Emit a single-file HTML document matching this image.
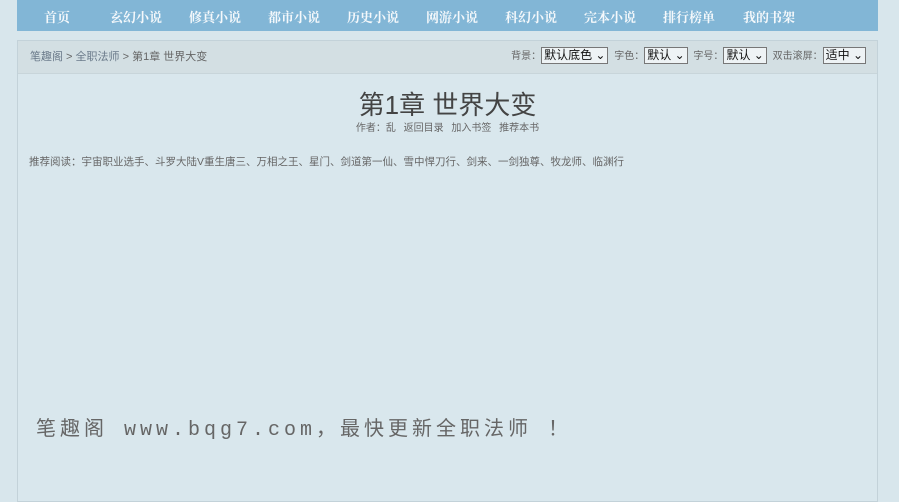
<!DOCTYPE html>
<html><head><meta charset="utf-8"><style>
body{margin:0;background:#d8e6ec;width:899px;height:491px;overflow:hidden;font-family:"Liberation Sans","Noto Sans CJK SC",sans-serif;color:#555;}
.nav{position:absolute;left:17px;top:0;width:861px;height:31px;background:#82b6d6;}
.nav span{position:absolute;top:7px;font:bold 13px "Liberation Serif","Noto Serif CJK SC",serif;color:#f4f8fb;transform:translateX(-50%);white-space:nowrap}
.box{position:absolute;left:17px;top:40px;width:859px;height:460px;border:1px solid #c3d2d9;background:#d9e7ed;}
.bc{height:32px;background:#d3dfe3;border-bottom:1px solid #c8d5da;font-size:11px;line-height:32px;padding-left:12px;color:#666;position:relative}
.bc a{color:#6a7a8a}
.opt{position:absolute;right:8px;top:0;font-size:10px;color:#666}
.opt b{font-weight:normal;display:inline-block;border:1px solid #777;background:#eef3f5;color:#111;font-size:12px;line-height:15px;padding:0 2px;margin-right:3px}
h1{position:absolute;top:44px;left:0;width:859px;text-align:center;font-size:26px;font-weight:normal;color:#444;margin:0}
.info{position:absolute;top:78px;width:859px;text-align:center;font-size:10px;color:#666;word-spacing:5px}
.rec{position:absolute;top:113px;left:11px;font-size:10.5px;color:#666}
.foot{position:absolute;top:371px;left:18px;font:20px "Liberation Mono","Noto Sans CJK SC",monospace;color:#666;letter-spacing:4px;white-space:nowrap}
</style></head><body>
<div class="nav">
<span style="left:40px">首页</span><span style="left:119px">玄幻小说</span><span style="left:198px">修真小说</span><span style="left:277px">都市小说</span><span style="left:356px">历史小说</span><span style="left:435px">网游小说</span><span style="left:514px">科幻小说</span><span style="left:593px">完本小说</span><span style="left:672px">排行榜单</span><span style="left:752px">我的书架</span>
</div>
<div class="box">
<div class="bc"><a>笔趣阁</a> &gt; <a>全职法师</a> &gt; 第1章 世界大变
<div class="opt">背景：<b>默认底色 ⌄</b> 字色：<b>默认 ⌄</b> 字号：<b>默认 ⌄</b> 双击滚屏：<b>适中 ⌄</b></div></div>
<h1>第1章 世界大变</h1>
<div class="info">作者：乱 返回目录 加入书签 推荐本书</div>
<div class="rec">推荐阅读：宇宙职业选手、斗罗大陆V重生唐三、万相之王、星门、剑道第一仙、雪中悍刀行、剑来、一剑独尊、牧龙师、临渊行</div>
<div class="foot">笔趣阁 www.bqg7.com，最快更新全职法师 ！</div>
</div>
</body></html>
